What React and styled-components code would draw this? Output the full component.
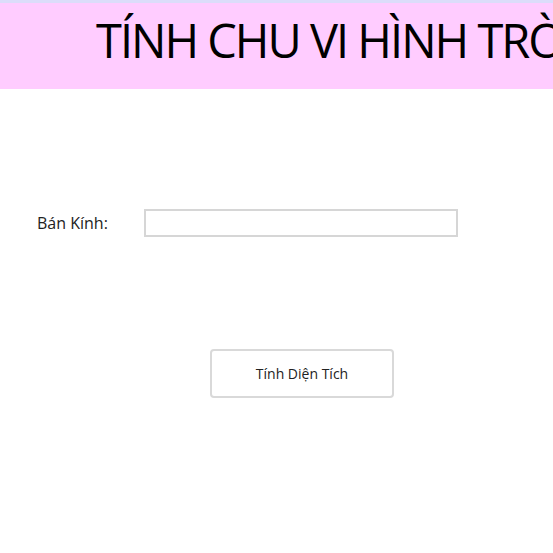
import React, { useState } from 'react'
import styled, { createGlobalStyle } from 'styled-components'

const GlobalStyle = createGlobalStyle`
  html, body {
    margin: 0;
    padding: 0;
    background: #ffffff;
    font-family: "Open Sans", "Noto Sans", sans-serif;
  }
`

const Page = styled.div`
  width: 553px;
  height: 553px;
  overflow: hidden;
  background: #fff;
`

const Header = styled.header`
  box-sizing: border-box;
  height: 89px;
  border-top: 3px solid #dcdcfa;
  background: #ffccff;
  display: flex;
  align-items: center;
  padding-left: 96px;
  padding-bottom: 12px;
  overflow: hidden;
`

const Title = styled.h1`
  margin: 0;
  font-weight: 400;
  font-size: 47px;
  line-height: 1;
  color: #000;
  white-space: nowrap;
  letter-spacing: -2px;
`

const Form = styled.div`
  display: flex;
  flex-direction: column;
  padding-top: 120px;
`

const Row = styled.div`
  display: flex;
  align-items: center;
  padding-left: 37px;
`

const Label = styled.label`
  width: 107px;
  font-size: 16px;
  color: #222;
`

const Input = styled.input`
  box-sizing: border-box;
  width: 314px;
  height: 28px;
  border: 2px solid #d6d6d6;
  outline: none;
  padding: 0 6px;
  font-family: inherit;
  font-size: 14px;
`

const Actions = styled.div`
  display: flex;
  padding-left: 210px;
  padding-top: 112px;
`

const Button = styled.button`
  box-sizing: border-box;
  width: 184px;
  height: 49px;
  background: #fff;
  border: 2px solid #d9d9d9;
  border-radius: 4px;
  font-family: inherit;
  font-size: 14px;
  color: #222;
  cursor: pointer;
`

export default function App() {
  const [r, setR] = useState('')
  return (
    <Page>
      <GlobalStyle />
      <Header>
        <Title>TÍNH CHU VI HÌNH TRÒN</Title>
      </Header>
      <Form>
        <Row>
          <Label>Bán Kính:</Label>
          <Input value={r} onChange={(e) => setR(e.target.value)} />
        </Row>
        <Actions>
          <Button>Tính Diện Tích</Button>
        </Actions>
      </Form>
    </Page>
  )
}
